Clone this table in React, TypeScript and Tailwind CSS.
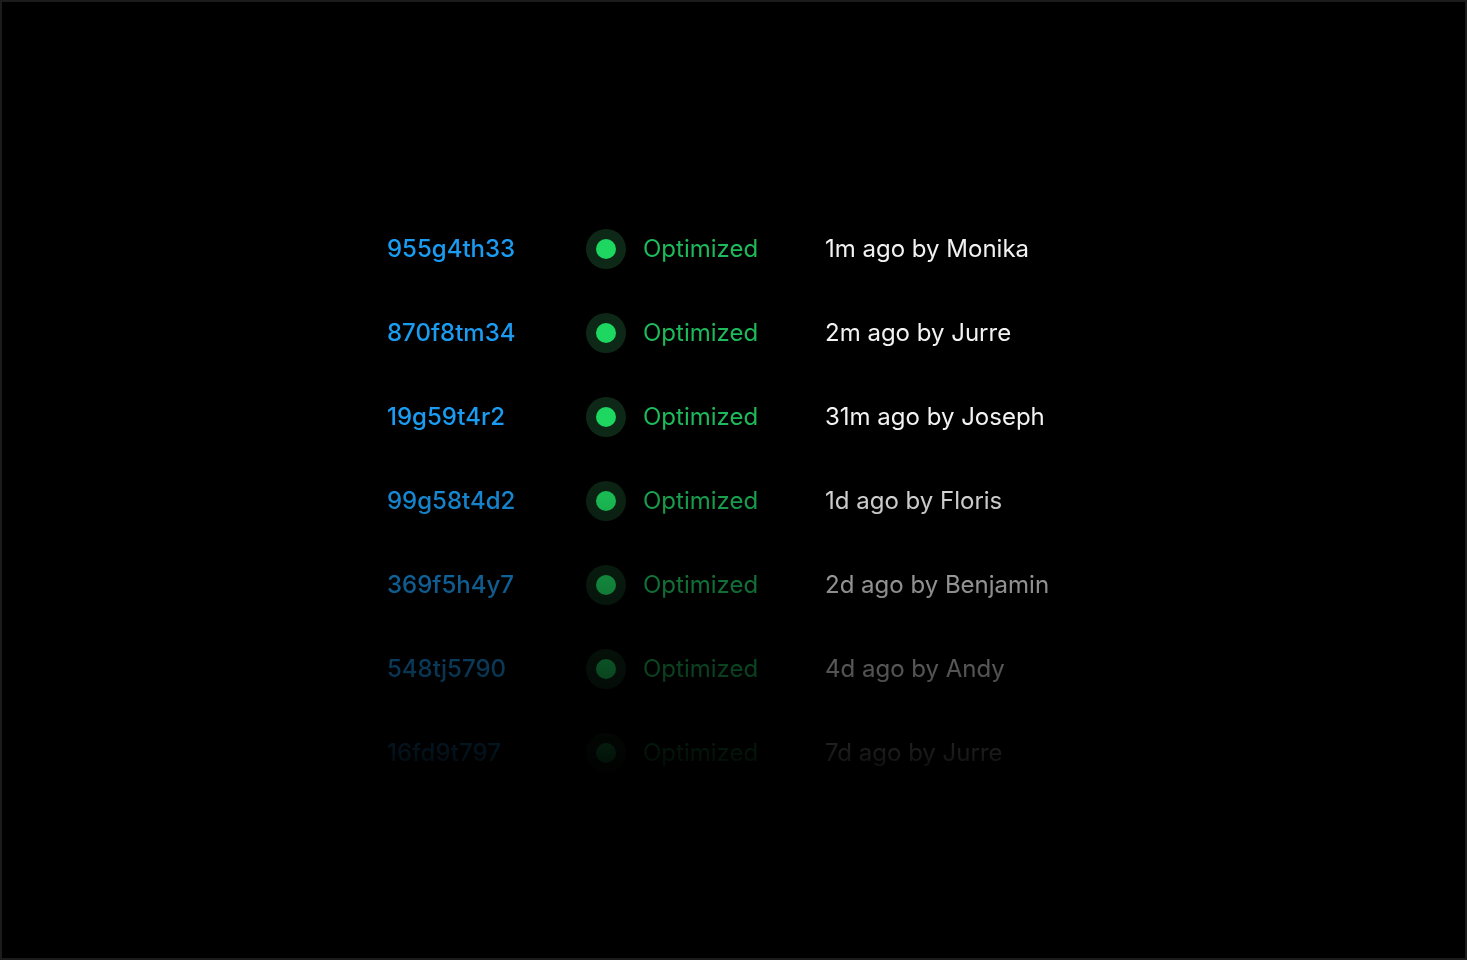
import React from "react";

const rows = [
  { id: "955g4th33", time: "1m ago by Monika" },
  { id: "870f8tm34", time: "2m ago by Jurre" },
  { id: "19g59t4r2", time: "31m ago by Joseph" },
  { id: "99g58t4d2", time: "1d ago by Floris" },
  { id: "369f5h4y7", time: "2d ago by Benjamin" },
  { id: "548tj5790", time: "4d ago by Andy" },
  { id: "16fd9t797", time: "7d ago by Jurre" },
];

export default function App() {
  return (
    <div
      className="w-[1467px] h-[960px] bg-black border-2 border-[#1c1c1c] flex flex-col items-start pl-[385px] pt-[205px]"
      style={{ fontFamily: "Inter, 'Noto Sans', sans-serif" }}
    >
      <div className="flex flex-col [mask-image:linear-gradient(to_bottom,black_41%,transparent_99%)]">
        {rows.map((r) => (
          <div key={r.id} className="flex items-center h-[84px] text-[24px] leading-none">
            <div className="w-[199px] text-[#1a9cf2] font-medium">{r.id}</div>
            <div className="w-[40px] h-[40px] rounded-full bg-[#0d2816] flex items-center justify-center">
              <div className="w-[20px] h-[20px] rounded-full bg-[#1ed760]" />
            </div>
            <div className="w-[199px] pl-[17px] text-[#1db95a]">Optimized</div>
            <div className="text-[#f2f2f2]">{r.time}</div>
          </div>
        ))}
      </div>
    </div>
  );
}
